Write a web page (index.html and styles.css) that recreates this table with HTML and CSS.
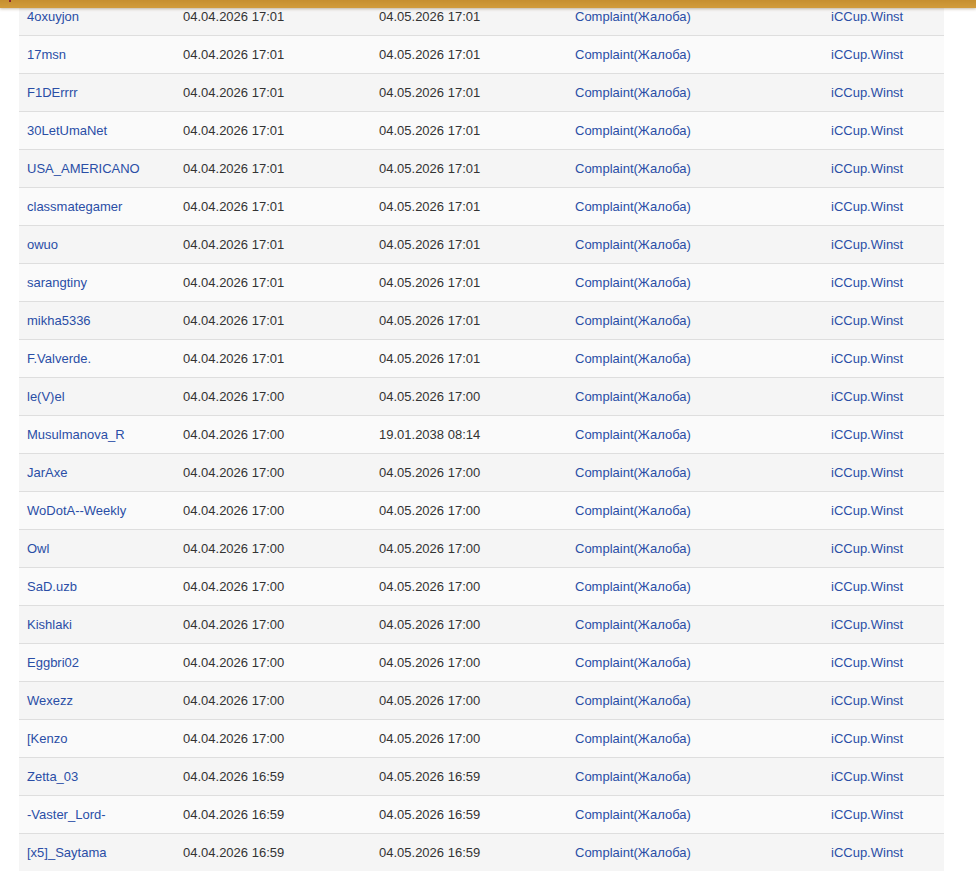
FILE: index.html
```html
<!DOCTYPE html>
<html lang="ru">
<head>
<meta charset="utf-8">
<title>Bans</title>
<link rel="stylesheet" href="styles.css">
</head>
<body>
<header class="topbar"><span class="topbar-mark"></span></header>
<main class="content">
<table class="bans">
<colgroup>
<col class="c-nick"><col class="c-date"><col class="c-date"><col class="c-reason"><col class="c-admin">
</colgroup>
<tbody>
<tr><td><a href="#">4oxuyjon</a></td><td>04.04.2026 17:01</td><td>04.05.2026 17:01</td><td><a href="#">Complaint(Жалоба)</a></td><td><a href="#">iCCup.Winst</a></td></tr>
<tr><td><a href="#">17msn</a></td><td>04.04.2026 17:01</td><td>04.05.2026 17:01</td><td><a href="#">Complaint(Жалоба)</a></td><td><a href="#">iCCup.Winst</a></td></tr>
<tr><td><a href="#">F1DErrrr</a></td><td>04.04.2026 17:01</td><td>04.05.2026 17:01</td><td><a href="#">Complaint(Жалоба)</a></td><td><a href="#">iCCup.Winst</a></td></tr>
<tr><td><a href="#">30LetUmaNet</a></td><td>04.04.2026 17:01</td><td>04.05.2026 17:01</td><td><a href="#">Complaint(Жалоба)</a></td><td><a href="#">iCCup.Winst</a></td></tr>
<tr><td><a href="#">USA_AMERICANO</a></td><td>04.04.2026 17:01</td><td>04.05.2026 17:01</td><td><a href="#">Complaint(Жалоба)</a></td><td><a href="#">iCCup.Winst</a></td></tr>
<tr><td><a href="#">classmategamer</a></td><td>04.04.2026 17:01</td><td>04.05.2026 17:01</td><td><a href="#">Complaint(Жалоба)</a></td><td><a href="#">iCCup.Winst</a></td></tr>
<tr><td><a href="#">owuo</a></td><td>04.04.2026 17:01</td><td>04.05.2026 17:01</td><td><a href="#">Complaint(Жалоба)</a></td><td><a href="#">iCCup.Winst</a></td></tr>
<tr><td><a href="#">sarangtiny</a></td><td>04.04.2026 17:01</td><td>04.05.2026 17:01</td><td><a href="#">Complaint(Жалоба)</a></td><td><a href="#">iCCup.Winst</a></td></tr>
<tr><td><a href="#">mikha5336</a></td><td>04.04.2026 17:01</td><td>04.05.2026 17:01</td><td><a href="#">Complaint(Жалоба)</a></td><td><a href="#">iCCup.Winst</a></td></tr>
<tr><td><a href="#">F.Valverde.</a></td><td>04.04.2026 17:01</td><td>04.05.2026 17:01</td><td><a href="#">Complaint(Жалоба)</a></td><td><a href="#">iCCup.Winst</a></td></tr>
<tr><td><a href="#">le(V)el</a></td><td>04.04.2026 17:00</td><td>04.05.2026 17:00</td><td><a href="#">Complaint(Жалоба)</a></td><td><a href="#">iCCup.Winst</a></td></tr>
<tr><td><a href="#">Musulmanova_R</a></td><td>04.04.2026 17:00</td><td>19.01.2038 08:14</td><td><a href="#">Complaint(Жалоба)</a></td><td><a href="#">iCCup.Winst</a></td></tr>
<tr><td><a href="#">JarAxe</a></td><td>04.04.2026 17:00</td><td>04.05.2026 17:00</td><td><a href="#">Complaint(Жалоба)</a></td><td><a href="#">iCCup.Winst</a></td></tr>
<tr><td><a href="#">WoDotA--Weekly</a></td><td>04.04.2026 17:00</td><td>04.05.2026 17:00</td><td><a href="#">Complaint(Жалоба)</a></td><td><a href="#">iCCup.Winst</a></td></tr>
<tr><td><a href="#">Owl</a></td><td>04.04.2026 17:00</td><td>04.05.2026 17:00</td><td><a href="#">Complaint(Жалоба)</a></td><td><a href="#">iCCup.Winst</a></td></tr>
<tr><td><a href="#">SaD.uzb</a></td><td>04.04.2026 17:00</td><td>04.05.2026 17:00</td><td><a href="#">Complaint(Жалоба)</a></td><td><a href="#">iCCup.Winst</a></td></tr>
<tr><td><a href="#">Kishlaki</a></td><td>04.04.2026 17:00</td><td>04.05.2026 17:00</td><td><a href="#">Complaint(Жалоба)</a></td><td><a href="#">iCCup.Winst</a></td></tr>
<tr><td><a href="#">Eggbri02</a></td><td>04.04.2026 17:00</td><td>04.05.2026 17:00</td><td><a href="#">Complaint(Жалоба)</a></td><td><a href="#">iCCup.Winst</a></td></tr>
<tr><td><a href="#">Wexezz</a></td><td>04.04.2026 17:00</td><td>04.05.2026 17:00</td><td><a href="#">Complaint(Жалоба)</a></td><td><a href="#">iCCup.Winst</a></td></tr>
<tr><td><a href="#">[Kenzo</a></td><td>04.04.2026 17:00</td><td>04.05.2026 17:00</td><td><a href="#">Complaint(Жалоба)</a></td><td><a href="#">iCCup.Winst</a></td></tr>
<tr><td><a href="#">Zetta_03</a></td><td>04.04.2026 16:59</td><td>04.05.2026 16:59</td><td><a href="#">Complaint(Жалоба)</a></td><td><a href="#">iCCup.Winst</a></td></tr>
<tr><td><a href="#">-Vaster_Lord-</a></td><td>04.04.2026 16:59</td><td>04.05.2026 16:59</td><td><a href="#">Complaint(Жалоба)</a></td><td><a href="#">iCCup.Winst</a></td></tr>
<tr><td><a href="#">[x5]_Saytama</a></td><td>04.04.2026 16:59</td><td>04.05.2026 16:59</td><td><a href="#">Complaint(Жалоба)</a></td><td><a href="#">iCCup.Winst</a></td></tr>
</tbody>
</table>
</main>
</body>
</html>
```

FILE: styles.css
```css
html, body {
  margin: 0;
  padding: 0;
  background: #ffffff;
  overflow: hidden;
}
body {
  font-family: "Liberation Sans", Arial, sans-serif;
  font-size: 13px;
  color: #333333;
}
.topbar {
  position: fixed;
  top: 0;
  left: 0;
  right: 0;
  height: 8px;
  background: linear-gradient(#c68f30, #d29c3c);
  box-shadow: 0 1px 3px rgba(90, 60, 10, 0.35);
  z-index: 10;
}
.topbar-mark {
  position: absolute;
  left: 9px;
  top: 0;
  width: 2px;
  height: 2px;
  background: #8a2430;
}
.content {
  padding: 0 32px 0 19px;
  margin-top: -2px;
}
.bans {
  width: 925px;
  border-collapse: collapse;
  table-layout: fixed;
}
.c-nick { width: 156px; }
.c-date { width: 196px; }
.c-reason { width: 256px; }
.c-admin { width: 121px; }
.bans td {
  height: 37px;
  padding: 0 8px;
  vertical-align: middle;
  border-bottom: 1px solid #dedede;
  white-space: nowrap;
  line-height: 15px;
}
.bans tr:nth-child(odd) td { background: #f5f5f5; }
.bans tr:nth-child(even) td { background: #fafafa; }
.bans a {
  color: #2a4ea6;
  text-decoration: none;
}
```
